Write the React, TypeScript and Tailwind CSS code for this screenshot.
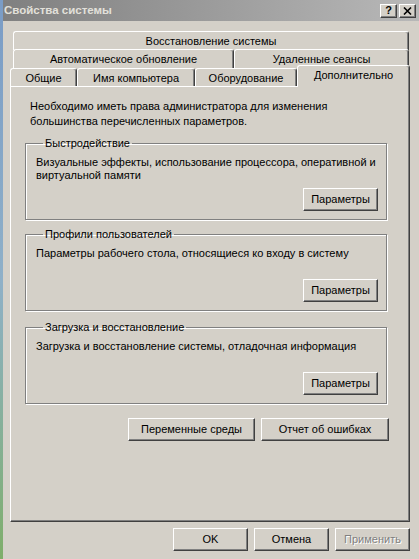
import React from "react"

const font = { fontFamily: '"Liberation Sans", Arial, sans-serif' }

function Btn({ label, className = "", disabled = false }: { label: string; className?: string; disabled?: boolean }) {
  return (
    <div
      className={`flex items-center justify-center h-[23px] bg-[#d4d0c8] border border-t-white border-l-white border-r-[#404040] border-b-[#404040] shadow-[inset_-1px_-1px_0_#808080] text-[11px] leading-none ${
        disabled ? "text-[#808080] [text-shadow:1px_1px_0_#ffffff]" : "text-black"
      } ${className}`}
    >
      {label}
    </div>
  )
}

function Tab({ label, className = "", selected = false }: { label: string; className?: string; selected?: boolean }) {
  return (
    <div
      className={`flex items-center justify-center bg-[#d4d0c8] border-t border-l border-r border-t-white border-l-white border-r-[#404040] rounded-t-[3px] shadow-[inset_-1px_0_0_#808080] text-[11px] text-black leading-none ${
        selected ? "relative z-10 h-[22px] pb-[3px]" : "h-[18px] pt-[1px]"
      } ${className}`}
    >
      {label}
    </div>
  )
}

function Group({ title, children, className = "" }: { title: string; children: React.ReactNode; className?: string }) {
  return (
    <fieldset
      className={`w-[362px] border border-[#808080] shadow-[1px_1px_0_#ffffff,inset_1px_1px_0_#ffffff] pl-[10px] pr-[8px] pb-[8px] ${className}`}
    >
      <legend className="ml-[7px] px-[2px] text-[11px] leading-[13px] text-black">{title}</legend>
      <div className="mt-[6px] h-[26px] text-[11px] leading-[13px] text-black">{children}</div>
      <div className="flex justify-end mt-[6px]">
        <Btn label="Параметры" className="w-[75px]" />
      </div>
    </fieldset>
  )
}

export default function App() {
  return (
    <div className="w-[419px] h-[559px] flex overflow-hidden select-none" style={font}>
      <div className="w-[3px] bg-gradient-to-b from-[#7a9cc6] via-[#8fb0c8] to-[#7fae6a]" />
      <div className="flex-1 flex flex-col bg-[#d4d0c8]">
        {/* title bar */}
        <div className="h-[21px] flex items-center justify-between pl-[1px] pr-[3px] bg-gradient-to-r from-[#808080] to-[#b8b8b8]">
          <span className="text-[11.5px] font-bold text-[#e2e0da]">Свойства системы</span>
          <div className="flex">
            <div className="w-[17px] h-[14px] flex items-center justify-center bg-[#d4d0c8] border border-t-white border-l-white border-r-[#404040] border-b-[#404040] shadow-[inset_-1px_-1px_0_#808080] text-[11px] font-bold leading-none text-black">
              ?
            </div>
            <div className="w-[17px] h-[14px] ml-[2px] flex items-center justify-center bg-[#d4d0c8] border border-t-white border-l-white border-r-[#404040] border-b-[#404040] shadow-[inset_-1px_-1px_0_#808080]">
              <svg width="9" height="8" viewBox="0 0 9 8">
                <path d="M1 0.5 L8 7.5 M8 0.5 L1 7.5" stroke="#000" strokeWidth="1.6" />
              </svg>
            </div>
          </div>
        </div>

        <div className="flex flex-col pl-[7px] pr-[9px] pt-[10px]">
          {/* tabs */}
          <div className="flex ml-[3px] mr-[1px]">
            <Tab label="Восстановление системы" className="flex-1 h-[19px]" />
          </div>
          <div className="flex ml-[3px] mr-[1px] -mt-[1px]">
            <Tab label="Автоматическое обновление" className="w-[221px] h-[19px]" />
            <Tab label="Удаленные сеансы" className="flex-1 h-[19px]" />
          </div>
          <div className="flex items-end -mt-[4px] h-[22px]">
            <Tab label="Общие" className="w-[67px]" />
            <Tab label="Имя компьютера" className="w-[118px]" />
            <Tab label="Оборудование" className="w-[102px]" />
            <Tab label="Дополнительно" selected className="flex-1 -mb-[1px]" />
          </div>

          {/* panel */}
          <div className="h-[436px] border border-t-white border-l-white border-r-[#404040] border-b-[#404040] shadow-[inset_-1px_-1px_0_#808080] pl-[14px] pt-[12px]">
            <p className="pl-[5px] text-[11px] leading-[15px] text-black">
              Необходимо иметь права администратора для изменения
              <br />
              большинства перечисленных параметров.
            </p>

            <Group title="Быстродействие" className="mt-[8px]">
              Визуальные эффекты, использование процессора, оперативной и
              <br />
              виртуальной памяти
            </Group>

            <Group title="Профили пользователей" className="mt-[8px]">
              Параметры рабочего стола, относящиеся ко входу в систему
            </Group>

            <Group title="Загрузка и восстановление" className="mt-[10px]">
              Загрузка и восстановление системы, отладочная информация
            </Group>

            <div className="flex justify-end w-[364px] mt-[14px] gap-[6px]">
              <Btn label="Переменные среды" className="w-[127px]" />
              <Btn label="Отчет об ошибках" className="w-[128px]" />
            </div>
          </div>

          {/* dialog buttons */}
          <div className="flex justify-end gap-[6px] mt-[6px]">
            <Btn label="OK" className="w-[75px]" />
            <Btn label="Отмена" className="w-[75px]" />
            <Btn label="Применить" className="w-[75px]" disabled />
          </div>
        </div>
      </div>
    </div>
  )
}
